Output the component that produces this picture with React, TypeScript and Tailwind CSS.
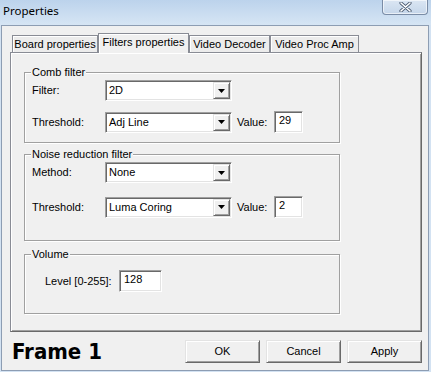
const ui = "font-['Liberation_Sans',Arial,sans-serif] text-[11px] text-black";

const sunken =
  "border border-t-[#a0a0a0] border-l-[#a0a0a0] border-b-white border-r-white shadow-[inset_1px_1px_0_#696969,inset_-1px_-1px_0_#e3e3e3] bg-white p-px";

const raised =
  "border border-t-[#e3e3e3] border-l-[#e3e3e3] border-b-[#696969] border-r-[#696969] shadow-[inset_1px_1px_0_#fff,inset_-1px_-1px_0_#a0a0a0] bg-[#f0f0f0]";

function Combo({ value }: { value: string }) {
  return (
    <div className={`flex h-[21px] w-[127px] ${sunken}`}>
      <div className="flex-1 pl-[2px] leading-[17px]">{value}</div>
      <div className={`flex h-[17px] w-[17px] items-center justify-center ${raised}`}>
        <svg width="7" height="4" viewBox="0 0 7 4">
          <path d="M0 0h7L3.5 4z" fill="#000" />
        </svg>
      </div>
    </div>
  );
}

function NumBox({ value, w }: { value: string; w: string }) {
  return (
    <div className={`h-[22px] ${w} ${sunken}`}>
      <div className="pl-[3px] leading-[14px]">{value}</div>
    </div>
  );
}

function Group({ title, h, children }: { title: string; h: string; children: React.ReactNode }) {
  return (
    <div
      className={`relative w-[316px] ${h} border border-[#a0a0a0] shadow-[inset_1px_1px_0_#fff,1px_1px_0_#fff]`}
    >
      <span className="absolute -top-[8px] left-[6px] bg-[#f0f0f0] px-[1px] leading-[14px]">
        {title}
      </span>
      {children}
    </div>
  );
}

function Row({ label, value, num }: { label: string; value: string; num?: string }) {
  return (
    <div className="flex items-center pl-[7px]">
      <span className="w-[73px]">{label}</span>
      <Combo value={value} />
      {num && (
        <>
          <span className="w-[42px] pl-[5px]">Value:</span>
          <NumBox value={num} w="w-[29px]" />
        </>
      )}
    </div>
  );
}

const tabs = [
  { name: "Board properties", w: "w-[86px]" },
  { name: "Filters properties", w: "w-[91px]", active: true },
  { name: "Video Decoder", w: "w-[81px]" },
  { name: "Video Proc Amp", w: "w-[89px]" },
];

export default function App() {
  return (
    <div className={`flex h-[372px] w-[431px] flex-col bg-[#d3e2f2] ${ui}`}>
      {/* title bar */}
      <div className="flex h-[25px] items-start justify-between bg-[linear-gradient(180deg,#bcd3ec,#d6e5f4)]">
        <span className="pl-[3px] pt-[2px] font-['Noto_Sans',sans-serif] text-[11.5px] leading-[18px] text-black">
          Properties
        </span>
        <div className="mr-[3px] flex h-[15px] w-[46px] items-center justify-center rounded-b-[4px] border border-t-0 border-[#7a8ca6] bg-[linear-gradient(180deg,#dbe6f3,#c5d6ea)] shadow-[inset_0_0_0_1px_rgba(255,255,255,0.6)]">
          <svg width="13" height="10" viewBox="0 0 13 10">
            <path d="M2 1l9 8M11 1l-9 8" stroke="#4a5a70" strokeWidth="3.2" strokeLinecap="round" />
            <path d="M2 1l9 8M11 1l-9 8" stroke="#fff" strokeWidth="1.6" strokeLinecap="round" />
          </svg>
        </div>
      </div>

      {/* dialog body */}
      <div className="ml-[1px] flex h-[346px] w-[428px] flex-col border border-[#8d9db3] bg-[#f0f0f0]">
        <div className="flex h-[26px] items-end pl-[10px] pt-[6px]">
          {tabs.map((t) =>
            t.active ? (
              <div
                key={t.name}
                className={`relative z-10 -mb-px flex h-[20px] ${t.w} items-center justify-center border border-b-0 border-[#898c95] bg-[#f0f0f0] pb-[2px] shadow-[inset_1px_1px_0_#fff]`}
              >
                {t.name}
              </div>
            ) : (
              <div
                key={t.name}
                className={`flex h-[17px] ${t.w} items-center justify-center border border-b-0 border-[#898c95] bg-[#ececec] shadow-[inset_1px_1px_0_#fff]`}
              >
                {t.name}
              </div>
            )
          )}
        </div>

        {/* tab panel */}
        <div className="ml-[8px] flex h-[280px] w-[412px] flex-col border border-[#898c95] border-r-[#696969] border-b-[#696969] pl-[13px] pt-[19px] shadow-[inset_1px_1px_0_#fff,inset_-1px_-1px_0_#a0a0a0]">
          <Group title="Comb filter" h="h-[71px]">
            <div className="flex flex-col gap-[10px] pt-[7px]">
              <Row label="Filter:" value="2D" />
              <Row label="Threshold:" value="Adj Line" num="29" />
            </div>
          </Group>
          <div className="mt-[11px]">
            <Group title="Noise reduction filter" h="h-[87px]">
              <div className="flex flex-col gap-[13px] pt-[7px]">
                <Row label="Method:" value="None" />
                <Row label="Threshold:" value="Luma Coring" num="2" />
              </div>
            </Group>
          </div>
          <div className="mt-[13px]">
            <Group title="Volume" h="h-[60px]">
              <div className="flex items-center pl-[20px] pt-[15px]">
                <span className="w-[74px]">Level [0-255]:</span>
                <NumBox value="128" w="w-[43px]" />
              </div>
            </Group>
          </div>
        </div>

        {/* bottom row */}
        <div className="mt-[8px] flex items-center justify-between pl-[10px] pr-[6px]">
          <span className="font-['DejaVu_Sans_Condensed','DejaVu_Sans',sans-serif] text-[22px] font-bold leading-[23px]">
            Frame 1
          </span>
          <div className="flex gap-[6px]">
            {["OK", "Cancel", "Apply"].map((b) => (
              <button key={b} className={`h-[23px] w-[75px] ${raised} ${ui}`}>
                {b}
              </button>
            ))}
          </div>
        </div>
      </div>
    </div>
  );
}
